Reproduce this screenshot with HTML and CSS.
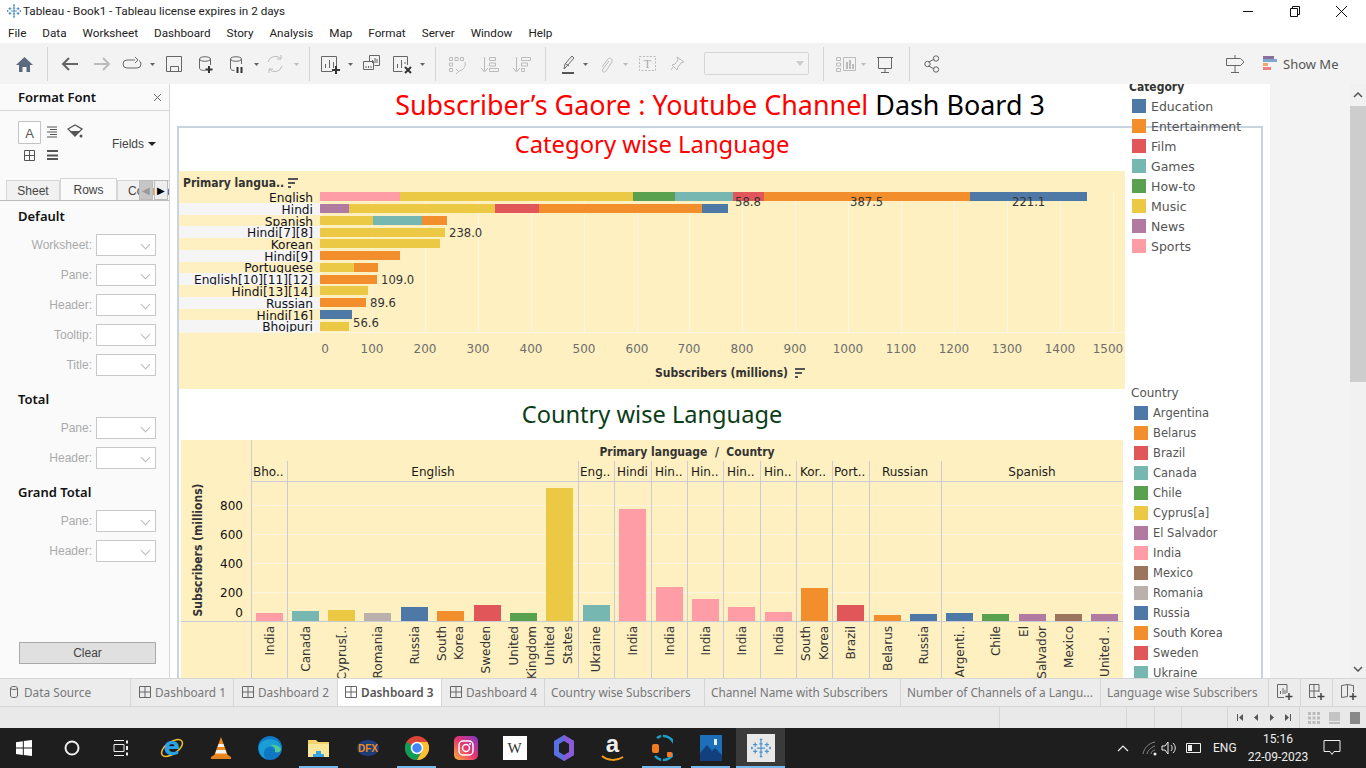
FILE: index.html
```html
<!DOCTYPE html>
<html>

<head>
    <title>Tableau - Book1</title>
    <link rel="stylesheet" href="styles.css">
</head>

<body>
    <svg class="defs" width="0" height="0">
        <symbol id="tableau-mark" viewBox="0 0 24 24">
            <path d="M12 3v18M7 12h10M10 7h4M10 17h4M5 5.500v5M2.500 8h5M19 5.500v5M16.500 8h5M5 13.500v5M2.500 16h5M19 13.500v5M16.500 16h5M12 0.500v3M10.500 2h3M12 20.500v3M10.500 22h3M1 10.500v3M-.5 12h3M23 10.500v3M21.500 12h3" fill="none" stroke-width="1.500"/>
        </symbol>
        <symbol id="dash-grid" viewBox="0 0 12 12">
            <path d="M.5.500h11v11H.500zM6 .5v11M.5 6h11" fill="none" stroke="#666"/>
        </symbol>
        <symbol id="sort-bars" viewBox="0 0 10 10">
            <path d="M0 0h11v2H0zM0 4h7v2H0zM0 8h3v2H0z" fill="#555"/>
        </symbol>
    </svg>

    <div class="app">
        <!-- Window title -->
        <div class="titlebar">
            <svg class="title-icon" width="14" height="14"><use href="#tableau-mark" stroke="#3b7fb8"/></svg>
            <span class="title-text">Tableau - Book1 - Tableau license expires in 2 days</span>
            <div class="win-buttons">
                <svg width="46" height="20" viewBox="0 0 46 20"><path d="M18 10.500h10" stroke="#111" fill="none"/></svg>
                <svg width="46" height="20" viewBox="0 0 46 20"><path d="M18.500 7.500h7v8h-7zM20.500 7.500v-2h7v8h-2" stroke="#111" fill="none"/></svg>
                <svg width="46" height="20" viewBox="0 0 46 20"><path d="M17 5l11 11M28 5L17 16" stroke="#111" fill="none"/></svg>
            </div>
        </div>

        <div class="menubar">
            <span>File</span><span>Data</span><span>Worksheet</span><span>Dashboard</span><span>Story</span><span>Analysis</span><span>Map</span><span>Format</span><span>Server</span><span>Window</span><span>Help</span>
        </div>

        <!-- Toolbar: each svg uses page x coordinates in its viewBox -->
        <div class="toolbar">
            <svg width="47" height="41" viewBox="0 43 47 41">
                <path d="M16 65l8.500-8 8.500 8h-3v7h-3.500v-5h-4v5H19v-7z" fill="#5b6b7d"/>
            </svg>
            <div class="tb-sep"></div>
            <svg width="261" height="41" viewBox="48 43 261 41">
                <path class="ic-bold" d="M78 64H63M69 58l-6 6 6 6"/>
                <path class="ic-bold off" d="M94 64h15M103 58l6 6-6 6"/>
                <path class="ic" d="M135 60h-8a4 4 0 0 0 0 8h10a4 4 0 0 0 4-4 4 4 0 0 0-2-3.500M135 57l3 3-3 3"/>
                <path class="caret" d="M150 63h5l-2.500 3z"/>
                <path class="ic" d="M166.500 56.500h15v15h-15zM170.500 71v-4.500h8V71"/>
                <path class="ic" d="M199.500 59c0-3 11-3 11 0v6M199.500 59c0 3 11 3 11 0M199.500 59v9c0 2 3 2.500 6 2.500"/>
                <path class="plus" d="M209 66v7M205.500 69.500h7"/>
                <path class="ic" d="M230.500 59c0-3 11-3 11 0v5M230.500 59c0 3 11 3 11 0M230.500 59v9c0 2 2 2.500 4 2.500"/>
                <path class="plus" d="M237.500 67v6M241.500 67v6"/>
                <path class="caret" d="M254 63h5l-2.500 3z"/>
                <path class="ic off" d="M268 62a7.500 7.500 0 0 1 13-3M282 66a7.500 7.500 0 0 1-13 3M281 55v4h-4M269 73v-4h4"/>
                <path class="caret off" d="M294 63h5l-2.500 3z"/>
            </svg>
            <div class="tb-sep"></div>
            <svg width="125" height="41" viewBox="310 43 125 41">
                <path class="ic" d="M336.500 66v-9.500h-15v15h11M325.500 68v-4M329.500 68v-8M333.500 68v-6"/>
                <path class="plus" d="M336 66v8M332 70h8"/>
                <path class="caret" d="M348 63h5l-2.500 3z"/>
                <path class="ic" d="M369.500 61v-5.500h10v10h-5M372.500 63v-3M375 63v-5M377 63v-4M363.500 61.500h10v8h-10zM366 68v-2M368.500 68v-2M371 68v-2"/>
                <path class="ic" d="M407.500 65v-8.500h-14v15h9M397.500 68v-4M401.500 68v-8M405 64v-2"/>
                <path class="plus" d="M405 67l6 6M411 67l-6 6"/>
                <path class="caret" d="M420 63h5l-2.500 3z"/>
            </svg>
            <div class="tb-sep"></div>
            <svg width="109" height="41" viewBox="436 43 109 41">
                <path class="ic off" d="M449.500 57.500h3v3h-3zM455 57.500h3v3h-3zM460.500 57.500h3v3h-3zM449.500 63h3v3h-3zM449.500 68.500h3v3h-3zM465 62c1 4-1 8-6 9M456 69l2.500 2.500L456 74"/>
                <path class="ic off" d="M484.500 57v14M481 68l3.500 4 3.500-4M489.500 57.500h6v3h-6zM489.500 63h6v3h-6zM489.500 68.500h9v3h-9z"/>
                <path class="ic off" d="M516.500 57v14M513 68l3.500 4 3.500-4M521.500 57.500h9v3h-9zM521.500 63h6v3h-6zM521.500 68.500h3v3h-3z"/>
            </svg>
            <div class="tb-sep"></div>
            <svg width="158" height="41" viewBox="546 43 158 41">
                <path class="ic" d="M564 69l1-5 7-8 2 2-7 8zM566 64l3 2"/>
                <path d="M562 72h12v2h-12z" fill="#555"/>
                <path class="caret" d="M583 63h5l-2.500 3z"/>
                <path class="ic off" d="M609 61l-6 8c-2 3 1 4 3 2l6-9c1-3-2-5-4-3l-6 8"/>
                <path class="caret off" d="M623 63h5l-2.500 3z"/>
                <path class="ic off dashed" d="M639.500 56.500h16v14h-16z"/>
                <text class="t-box" x="647.500" y="68" text-anchor="middle">T</text>
                <path class="ic off" d="M677 57l7 5-3 1-3 4-1 3-5-5 3-1 3-4zM673 67l-2 3"/>
            </svg>
            <div class="tb-select"><svg width="8" height="5" viewBox="0 0 8 5"><path d="M0 0h8L4 5z" fill="#ccc"/></svg></div>
            <div class="tb-gap"></div>
            <div class="tb-sep"></div>
            <svg width="85" height="41" viewBox="824 43 85 41">
                <path class="ic off" d="M836.500 57.500h4v3h-4zM836.500 63h4v3h-4zM836.500 68.500h4v3h-4zM843.500 57.500h12v13h-12z"/>
                <path d="M846 62h2v7h-2zM849 60h2v9h-2zM852 64h2v5h-2z" fill="#bbb"/>
                <path class="caret off" d="M861 63h5l-2.500 3z"/>
                <path class="ic" d="M877 57.500h16M878.500 57.500v11h13v-11M885 68.500v4M881 72.500h8"/>
            </svg>
            <div class="tb-sep"></div>
            <svg width="40" height="41" viewBox="910 43 40 41">
                <path class="ic" d="M928.500 62l6-3M928.500 66l6 3"/>
                <circle class="ic" cx="927.500" cy="64" r="2.700"/>
                <circle class="ic" cx="936" cy="58.500" r="2.700"/>
                <circle class="ic" cx="936" cy="69.500" r="2.700"/>
            </svg>
            <div class="tb-spacer"></div>
            <svg width="30" height="41" viewBox="1220 43 30 41">
                <path class="ic" d="M1235 55v3M1226.500 58.500h14l3.500 3.500-3.500 3.500h-14zM1235 65.500V72M1231 72.500h8"/>
            </svg>
            <svg class="showme-icon" width="16" height="18" viewBox="0 0 16 18">
                <path d="M1 1h11v3H1z" fill="#8a6f9e"/>
                <path d="M1 4h14v3H1z" fill="#7ea6cf"/>
                <path d="M1 8h5v3H1z" fill="#f0a56b"/>
                <path d="M1 12h8v3H1z" fill="#ef7f86"/>
            </svg>
            <span class="showme">Show Me</span>
        </div>

        <div class="main">
            <!-- Format pane -->
            <aside class="sidebar">
                <div class="pane-head">
                    <span>Format Font</span>
                    <svg width="9" height="9" viewBox="0 0 9 9"><path d="M1 1l7 7M8 1L1 8" stroke="#666" fill="none"/></svg>
                </div>
                <div class="pane-icons">
                    <svg width="80" height="46" viewBox="18 121 80 46">
                        <path d="M18.500 121.500h22v22h-22z" fill="#fff" stroke="#c4c4c4"/>
                        <text class="a-glyph" x="29.500" y="138" text-anchor="middle">A</text>
                        <path d="M47 127h10M50 129.500h7M47 132h10M50 134.500h7M47 137h10" stroke="#555" fill="none"/>
                        <path d="M68 129l7-4 7 4-7 7z" fill="none" stroke="#555" stroke-width="1.300"/>
                        <path d="M70 131h10l-5 5z" fill="#555"/>
                        <circle cx="81" cy="136" r="1.500" fill="#555"/>
                        <path d="M24.500 150.500h10v10h-10zM29.500 150.500v10M24.500 155.500h10" fill="none" stroke="#555"/>
                        <path d="M47 150h11v2H47zM47 154.500h11v2H47zM47 158h11v2H47z" fill="#555"/>
                    </svg>
                    <div class="fields">Fields<span class="fields-caret"></span></div>
                </div>
                <div class="pane-tabs">
                    <span class="pane-tab">Sheet</span>
                    <span class="pane-tab active">Rows</span>
                    <span class="pane-tab last">Columns</span>
                    <div class="tab-arrows"><span class="arrow-off">&#9664;</span><span class="arrow-on">&#9654;</span></div>
                </div>

                <section class="fmt-group first">
                    <h4>Default</h4>
                    <div class="fmt-row"><label>Worksheet:</label><span class="fmt-select"></span></div>
                    <div class="fmt-row"><label>Pane:</label><span class="fmt-select"></span></div>
                    <div class="fmt-row"><label>Header:</label><span class="fmt-select"></span></div>
                    <div class="fmt-row"><label>Tooltip:</label><span class="fmt-select"></span></div>
                    <div class="fmt-row"><label>Title:</label><span class="fmt-select"></span></div>
                </section>
                <section class="fmt-group">
                    <h4>Total</h4>
                    <div class="fmt-row"><label>Pane:</label><span class="fmt-select"></span></div>
                    <div class="fmt-row"><label>Header:</label><span class="fmt-select"></span></div>
                </section>
                <section class="fmt-group">
                    <h4>Grand Total</h4>
                    <div class="fmt-row"><label>Pane:</label><span class="fmt-select"></span></div>
                    <div class="fmt-row"><label>Header:</label><span class="fmt-select"></span></div>
                </section>
                <button class="clear-btn">Clear</button>
            </aside>

            <!-- Dashboard -->
            <div class="canvas">
                <h1 class="dash-title"><span class="red">Subscriber’s Gaore : Youtube Channel</span> Dash Board 3</h1>
                <div class="frame">
                    <h2 class="chart-title red">Category wise Language</h2>
                    <svg class="chart" width="946" height="218" viewBox="179 171 946 218">
                        <rect class="bg" x="179" y="171" width="946" height="218"/>
                        <text class="head" x="183" y="187">Primary langua..</text>
                        <use href="#sort-bars" x="288" y="178" width="10" height="10"/>

                        <!-- row bands come before each label, so the next band cuts the descenders -->
                        <rect class="bg" x="179" y="190" width="141" height="13"/>
                        <text class="row" x="313" y="202">English</text>
                        <rect class="band" x="179" y="203" width="141" height="12"/>
                        <text class="row" x="313" y="214">Hindi</text>
                        <rect class="bg" x="179" y="215" width="141" height="11"/>
                        <text class="row" x="313" y="226">Spanish</text>
                        <rect class="band" x="179" y="226" width="141" height="12"/>
                        <text class="row" x="313" y="237">Hindi[7][8]</text>
                        <rect class="bg" x="179" y="238" width="141" height="12"/>
                        <text class="row" x="313" y="249">Korean</text>
                        <rect class="band" x="179" y="250" width="141" height="12"/>
                        <text class="row" x="313" y="261">Hindi[9]</text>
                        <rect class="bg" x="179" y="262" width="141" height="11"/>
                        <text class="row" x="313" y="272">Portuguese</text>
                        <rect class="band" x="179" y="273" width="141" height="12"/>
                        <text class="row" x="313" y="284">English[10][11][12]</text>
                        <rect class="bg" x="179" y="285" width="141" height="12"/>
                        <text class="row" x="313" y="296">Hindi[13][14]</text>
                        <rect class="band" x="179" y="297" width="141" height="12"/>
                        <text class="row" x="313" y="308">Russian</text>
                        <rect class="bg" x="179" y="309" width="141" height="11"/>
                        <text class="row" x="313" y="320">Hindi[16]</text>
                        <rect class="band" x="179" y="320" width="141" height="12"/>
                        <text class="row" x="313" y="331">Bhojpuri</text>
                        <rect class="bg" x="179" y="332" width="141" height="10"/>

                        <path class="grid" d="M320.500 191v141M372.500 191v141M425.500 191v141M478.500 191v141M531.500 191v141M584.500 191v141M637.500 191v141M689.500 191v141M742.500 191v141M795.500 191v141M848.500 191v141M901.500 191v141M954.500 191v141M1007.500 191v141M1060.500 191v141M1113.500 191v141M179 332.500h946"/>

                        <rect class="pink" x="320" y="192" width="80" height="9"/>
                        <rect class="yellow" x="400" y="192" width="233" height="9"/>
                        <rect class="green" x="633" y="192" width="42" height="9"/>
                        <rect class="teal" x="675" y="192" width="58" height="9"/>
                        <rect class="red" x="733" y="192" width="31" height="9"/>
                        <rect class="orange" x="764" y="192" width="206" height="9"/>
                        <rect class="blue" x="970" y="192" width="117" height="9"/>

                        <rect class="purple" x="320" y="204" width="29" height="9"/>
                        <rect class="yellow" x="349" y="204" width="146" height="9"/>
                        <rect class="red" x="495" y="204" width="44" height="9"/>
                        <rect class="orange" x="539" y="204" width="163" height="9"/>
                        <rect class="blue" x="702" y="204" width="26" height="9"/>

                        <rect class="yellow" x="320" y="216" width="53" height="9"/>
                        <rect class="teal" x="373" y="216" width="49" height="9"/>
                        <rect class="orange" x="422" y="216" width="25" height="9"/>

                        <rect class="yellow" x="320" y="228" width="125" height="9"/>
                        <rect class="yellow" x="320" y="239" width="120" height="9"/>
                        <rect class="orange" x="320" y="251" width="80" height="9"/>
                        <rect class="yellow" x="320" y="263" width="34" height="9"/>
                        <rect class="orange" x="354" y="263" width="24" height="9"/>
                        <rect class="orange" x="320" y="275" width="57" height="9"/>
                        <rect class="yellow" x="320" y="286" width="48" height="9"/>
                        <rect class="orange" x="320" y="298" width="46" height="9"/>
                        <rect class="blue" x="320" y="310" width="32" height="9"/>
                        <rect class="yellow" x="320" y="322" width="29" height="9"/>

                        <text class="mark" x="735" y="206">58.8</text>
                        <text class="mark" x="850" y="206">387.5</text>
                        <text class="mark" x="1012" y="206">221.1</text>
                        <text class="mark" x="449" y="237">238.0</text>
                        <text class="mark" x="381" y="284">109.0</text>
                        <text class="mark" x="370" y="307">89.6</text>
                        <text class="mark" x="353" y="327">56.6</text>

                        <g class="ticks">
                            <text x="325" y="353">0</text>
                            <text x="372" y="353">100</text>
                            <text x="425" y="353">200</text>
                            <text x="478" y="353">300</text>
                            <text x="531" y="353">400</text>
                            <text x="584" y="353">500</text>
                            <text x="637" y="353">600</text>
                            <text x="689" y="353">700</text>
                            <text x="742" y="353">800</text>
                            <text x="795" y="353">900</text>
                            <text x="848" y="353">1000</text>
                            <text x="901" y="353">1100</text>
                            <text x="954" y="353">1200</text>
                            <text x="1007" y="353">1300</text>
                            <text x="1060" y="353">1400</text>
                            <text x="1108" y="353">1500</text>
                        </g>
                        <text class="head" x="655" y="377">Subscribers (millions)</text>
                        <use href="#sort-bars" x="795" y="368" width="10" height="10"/>
                    </svg>

                    <h2 class="chart-title dark">Country wise Language</h2>
                    <svg class="chart second" width="942" height="240" viewBox="181 440 942 240">
                        <rect class="bg" x="181" y="440" width="942" height="240"/>
                        <path class="grid" d="M252 505.500h871M252 534.500h871M252 563.500h871M252 592.500h871"/>
                        <path class="divider" d="M251.500 440v240M287.500 461v219M578.500 461v219M614.500 461v219M651.500 461v219M687.500 461v219M723.500 461v219M760.500 461v219M796.500 461v219M832.500 461v219M869.500 461v219M941.500 461v219M252 481.500h871M181 621.500h942"/>

                        <text class="head" x="687" y="456" text-anchor="middle">Primary language  /  Country</text>
                        <text class="sub" x="253" y="476">Bho..</text>
                        <text class="sub" x="433" y="476" text-anchor="middle">English</text>
                        <text class="sub" x="580" y="476">Eng..</text>
                        <text class="sub" x="617" y="476">Hindi</text>
                        <text class="sub" x="655" y="476">Hin..</text>
                        <text class="sub" x="691" y="476">Hin..</text>
                        <text class="sub" x="727" y="476">Hin..</text>
                        <text class="sub" x="764" y="476">Hin..</text>
                        <text class="sub" x="800" y="476">Kor..</text>
                        <text class="sub" x="834" y="476">Port..</text>
                        <text class="sub" x="905" y="476" text-anchor="middle">Russian</text>
                        <text class="sub" x="1032" y="476" text-anchor="middle">Spanish</text>

                        <text class="head" transform="rotate(-90 202 550)" x="202" y="550" text-anchor="middle">Subscribers (millions)</text>
                        <g class="yticks">
                            <text x="243" y="510">800</text>
                            <text x="243" y="539">600</text>
                            <text x="243" y="568">400</text>
                            <text x="243" y="597">200</text>
                            <text x="243" y="617">0</text>
                        </g>

                        <rect class="pink" x="256" y="613" width="27" height="8"/>
                        <rect class="teal" x="292" y="611" width="27" height="10"/>
                        <rect class="yellow" x="328" y="610" width="27" height="11"/>
                        <rect class="gray" x="364" y="613" width="27" height="8"/>
                        <rect class="blue" x="401" y="607" width="27" height="14"/>
                        <rect class="orange" x="437" y="611" width="27" height="10"/>
                        <rect class="red" x="474" y="605" width="27" height="16"/>
                        <rect class="green" x="510" y="613" width="27" height="8"/>
                        <rect class="yellow" x="546" y="488" width="27" height="133"/>
                        <rect class="teal" x="583" y="605" width="27" height="16"/>
                        <rect class="pink" x="619" y="509" width="27" height="112"/>
                        <rect class="pink" x="656" y="587" width="27" height="34"/>
                        <rect class="pink" x="692" y="599" width="27" height="22"/>
                        <rect class="pink" x="728" y="607" width="27" height="14"/>
                        <rect class="pink" x="765" y="612" width="27" height="9"/>
                        <rect class="orange" x="801" y="588" width="27" height="33"/>
                        <rect class="red" x="837" y="605" width="27" height="16"/>
                        <rect class="orange" x="874" y="615" width="27" height="6"/>
                        <rect class="blue" x="910" y="614" width="27" height="7"/>
                        <rect class="blue" x="946" y="613" width="27" height="8"/>
                        <rect class="green" x="982" y="614" width="27" height="7"/>
                        <rect class="purple" x="1019" y="614" width="27" height="7"/>
                        <rect class="brown" x="1055" y="614" width="27" height="7"/>
                        <rect class="purple" x="1091" y="614" width="27" height="7"/>

                        <g class="vlabels">
                            <text transform="rotate(-90 274 626)" x="274" y="626">India</text>
                            <text transform="rotate(-90 310 626)" x="310" y="626">Canada</text>
                            <text transform="rotate(-90 346 626)" x="346" y="626">Cyprus[..</text>
                            <text transform="rotate(-90 382 626)" x="382" y="626">Romania</text>
                            <text transform="rotate(-90 419 626)" x="419" y="626">Russia</text>
                            <text transform="rotate(-90 446 626)" x="446" y="626">South</text>
                            <text transform="rotate(-90 463 626)" x="463" y="626">Korea</text>
                            <text transform="rotate(-90 490 626)" x="490" y="626">Sweden</text>
                            <text transform="rotate(-90 518 626)" x="518" y="626">United</text>
                            <text transform="rotate(-90 536 626)" x="536" y="626">Kingdom</text>
                            <text transform="rotate(-90 554 626)" x="554" y="626">United</text>
                            <text transform="rotate(-90 572 626)" x="572" y="626">States</text>
                            <text transform="rotate(-90 600 626)" x="600" y="626">Ukraine</text>
                            <text transform="rotate(-90 637 626)" x="637" y="626">India</text>
                            <text transform="rotate(-90 674 626)" x="674" y="626">India</text>
                            <text transform="rotate(-90 710 626)" x="710" y="626">India</text>
                            <text transform="rotate(-90 746 626)" x="746" y="626">India</text>
                            <text transform="rotate(-90 783 626)" x="783" y="626">India</text>
                            <text transform="rotate(-90 810 626)" x="810" y="626">South</text>
                            <text transform="rotate(-90 828 626)" x="828" y="626">Korea</text>
                            <text transform="rotate(-90 855 626)" x="855" y="626">Brazil</text>
                            <text transform="rotate(-90 892 626)" x="892" y="626">Belarus</text>
                            <text transform="rotate(-90 928 626)" x="928" y="626">Russia</text>
                            <text transform="rotate(-90 964 626)" x="964" y="626">Argenti..</text>
                            <text transform="rotate(-90 1000 626)" x="1000" y="626">Chile</text>
                            <text transform="rotate(-90 1028 626)" x="1028" y="626">El</text>
                            <text transform="rotate(-90 1046 626)" x="1046" y="626">Salvador</text>
                            <text transform="rotate(-90 1073 626)" x="1073" y="626">Mexico</text>
                            <text transform="rotate(-90 1109 626)" x="1109" y="626">United ..</text>
                        </g>
                    </svg>
                </div>

                <!-- Legends float over the frame -->
                <div class="legend legend-category">
                    <div class="legend-title">Category</div>
                    <div class="legend-row"><i class="blue"></i>Education</div>
                    <div class="legend-row"><i class="orange"></i>Entertainment</div>
                    <div class="legend-row"><i class="red"></i>Film</div>
                    <div class="legend-row"><i class="teal"></i>Games</div>
                    <div class="legend-row"><i class="green"></i>How-to</div>
                    <div class="legend-row"><i class="yellow"></i>Music</div>
                    <div class="legend-row"><i class="purple"></i>News</div>
                    <div class="legend-row"><i class="pink"></i>Sports</div>
                </div>
                <div class="legend legend-country">
                    <div class="legend-title">Country</div>
                    <div class="legend-row"><i class="blue"></i>Argentina</div>
                    <div class="legend-row"><i class="orange"></i>Belarus</div>
                    <div class="legend-row"><i class="red"></i>Brazil</div>
                    <div class="legend-row"><i class="teal"></i>Canada</div>
                    <div class="legend-row"><i class="green"></i>Chile</div>
                    <div class="legend-row"><i class="yellow"></i>Cyprus[a]</div>
                    <div class="legend-row"><i class="purple"></i>El Salvador</div>
                    <div class="legend-row"><i class="pink"></i>India</div>
                    <div class="legend-row"><i class="brown"></i>Mexico</div>
                    <div class="legend-row"><i class="gray"></i>Romania</div>
                    <div class="legend-row"><i class="blue"></i>Russia</div>
                    <div class="legend-row"><i class="orange"></i>South Korea</div>
                    <div class="legend-row"><i class="red"></i>Sweden</div>
                    <div class="legend-row"><i class="teal"></i>Ukraine</div>
                </div>
            </div>

            <div class="gutter"></div>
            <div class="scrollbar">
                <div class="scroll-btn"><svg width="10" height="6" viewBox="0 0 10 6"><path d="M1 5l4-4 4 4" fill="none" stroke="#555" stroke-width="1.500"/></svg></div>
                <div class="scroll-thumb"></div>
                <div class="scroll-track"></div>
                <div class="scroll-btn down"><svg width="10" height="6" viewBox="0 0 10 6"><path d="M1 1l4 4 4-4" fill="none" stroke="#555" stroke-width="1.500"/></svg></div>
            </div>
        </div>

        <!-- Sheet tabs -->
        <div class="tabbar">
            <div class="tab t-source"><svg width="8" height="12" viewBox="0 0 8 12"><path d="M.5 2c0-2 7-2 7 0v8c0 2-7 2-7 0zM.5 2c0 2 7 2 7 0" fill="none" stroke="#666"/></svg>Data Source</div>
            <div class="tab t-dash"><svg width="12" height="12"><use href="#dash-grid"/></svg>Dashboard 1</div>
            <div class="tab t-dash2"><svg width="12" height="12"><use href="#dash-grid"/></svg>Dashboard 2</div>
            <div class="tab t-active"><svg width="12" height="12"><use href="#dash-grid"/></svg>Dashboard 3</div>
            <div class="tab t-dash4"><svg width="12" height="12"><use href="#dash-grid"/></svg>Dashboard 4</div>
            <div class="tab t-country">Country wise Subscribers</div>
            <div class="tab t-channel">Channel Name with Subscribers</div>
            <div class="tab t-number">Number of Channels of a Langu...</div>
            <div class="tab t-language">Language wise Subscribers</div>
            <div class="tab t-add"><svg width="18" height="18" viewBox="0 0 18 18"><path d="M11 10V1.500H1.500v13H8M4.500 11V8M7 11V5M9 11V7" fill="none" stroke="#666"/><path d="M13 10v7M9.500 13.500h7" stroke="#444" stroke-width="1.500" fill="none"/></svg></div>
            <div class="tab t-add"><svg width="18" height="18" viewBox="0 0 18 18"><path d="M11 9V1.500H1.500v13H8M1.500 8h9.500M6 1.500V14" fill="none" stroke="#666"/><path d="M13 10v7M9.500 13.500h7" stroke="#444" stroke-width="1.500" fill="none"/></svg></div>
            <div class="tab t-add last"><svg width="18" height="18" viewBox="0 0 18 18"><path d="M1.500 2.500l6-1v12l-6 1zM7.500 1.500l6 1V9" fill="none" stroke="#666"/><path d="M13 10v7M9.500 13.500h7" stroke="#444" stroke-width="1.500" fill="none"/></svg></div>
        </div>

        <div class="statusbar">
            <span class="st-cell st-wide"></span>
            <span class="st-cell st-b"></span>
            <span class="st-cell st-c"></span>
            <span class="st-cell st-d"></span>
            <span class="st-cell st-e"></span>
            <span class="st-nav">
                <svg width="72" height="21" viewBox="1227 707 72 21">
                    <path d="M1236.500 714v7" stroke="#555" fill="none"/>
                    <path d="M1242 714v7l-4-3.500zM1257 714v7l-4-3.500zM1269 714v7l4-3.500zM1284 714v7l4-3.500z" fill="#555"/>
                    <path d="M1289.500 714v7" stroke="#555" fill="none"/>
                </svg>
            </span>
            <span class="st-views">
                <svg width="67" height="21" viewBox="1299 707 67 21">
                    <path d="M1307 712h3v3h-3zM1311.500 712h3v3h-3zM1316 712h3v3h-3zM1307 716.500h3v3h-3zM1311.500 716.500h3v3h-3zM1316 716.500h3v3h-3zM1307 721h3v3h-3zM1311.500 721h3v3h-3zM1316 721h3v3h-3z" fill="#bbb"/>
                    <path d="M1328 712h11v9h-11z" fill="#c4c4c4"/>
                    <path d="M1328 722h11v2h-11z" fill="#bbb"/>
                    <path d="M1349 712h10v12h-10z" fill="#888"/>
                </svg>
            </span>
        </div>

        <!-- Windows taskbar -->
        <div class="taskbar">
            <div class="task-slot start">
                <svg width="16" height="16" viewBox="0 0 16 16"><path d="M0 2.200l6.800-1v6.400H0zM7.800 1L16 0v7.600H7.800zM0 8.600h6.800v6.300l-6.800-1zM7.800 8.600H16V16l-8.200-1.100z" fill="#fff"/></svg>
            </div>
            <div class="task-slot cortana">
                <svg width="16" height="16" viewBox="0 0 16 16"><circle cx="8" cy="8" r="6.500" fill="none" stroke="#eee" stroke-width="2"/></svg>
            </div>
            <div class="task-slot taskview">
                <svg width="16" height="16" viewBox="0 0 16 16"><path d="M1 .5h10M1 15.500h10M1 4.500h10v7H1z" fill="none" stroke="#eee"/><path d="M13 .5h2v3h-2zM13 6h2v4h-2zM13 12.500h2v3h-2z" fill="#eee"/></svg>
            </div>
            <div class="task-slot">
                <svg width="24" height="24" viewBox="0 0 24 24"><ellipse cx="12" cy="12" rx="12" ry="6" transform="rotate(-35 12 12)" fill="none" stroke="#f2c12e" stroke-width="1.500"/><text class="ie-e" x="12" y="19" text-anchor="middle">e</text></svg>
            </div>
            <div class="task-slot">
                <svg width="22" height="24" viewBox="0 0 22 24"><path d="M1 21l3-2h14l3 2v2H1z" fill="#e8821e"/><path d="M11 1l7 19H4z" fill="#f08a1d"/><path d="M8.600 8h4.800l1 3H7.600zM6.500 14h9l1 3.500H5.300z" fill="#f2f2f2"/></svg>
            </div>
            <div class="task-slot">
                <svg width="24" height="24" viewBox="0 0 24 24"><circle cx="12" cy="12" r="12" fill="#0f77c4"/><path d="M1 10C3 2 19 0 23 10c1 5-3 7-6 6 1-6-9-8-11 0-1 3 1 6 3 7-5-1-9-7-8-13z" fill="#1a9ed8"/><path d="M12 9c5-1 9 1 11 4 0 3-3 4-6 3 1-3-1-6-5-7z" fill="#4ecb8e"/></svg>
            </div>
            <div class="task-slot open">
                <svg width="22" height="20" viewBox="0 0 22 20"><path d="M0 2h8l2 2h11v15H0z" fill="#f3d26b"/><path d="M0 6h21v13H0z" fill="#fbe79a"/><path d="M8 13h5v6H8zM5 16h11v3H5z" fill="#3aa2dc"/></svg>
            </div>
            <div class="task-slot">
                <svg width="24" height="20" viewBox="0 0 24 20"><ellipse cx="12" cy="10" rx="11" ry="8" fill="#1c3e78"/><text class="dfx" x="12" y="14" text-anchor="middle">DFX</text></svg>
            </div>
            <div class="task-slot open">
                <svg width="24" height="24" viewBox="0 0 24 24"><circle cx="12" cy="12" r="12" fill="#db4437"/><path d="M12 12L1.600 6A12 12 0 0 0 12 24l5.200-9z" fill="#0f9d58"/><path d="M12 6h10.400A12 12 0 0 1 12 24l5.200-9z" fill="#fbc02d"/><circle cx="12" cy="12" r="5.500" fill="#4285f4" stroke="#fff" stroke-width="1.500"/></svg>
            </div>
            <div class="task-slot">
                <svg width="24" height="24" viewBox="0 0 24 24"><defs><linearGradient id="insta" x1="0" y1="1" x2="1" y2="0"><stop offset="0" stop-color="#fdb33a"/><stop offset=".5" stop-color="#e8336f"/><stop offset="1" stop-color="#7a3bc8"/></linearGradient></defs><rect width="24" height="24" rx="5" fill="url(#insta)"/><rect x="5" y="5" width="14" height="14" rx="4" fill="none" stroke="#fff" stroke-width="1.500"/><circle cx="12" cy="12" r="3.500" fill="none" stroke="#fff" stroke-width="1.500"/><circle cx="16" cy="8" r="1" fill="#fff"/></svg>
            </div>
            <div class="task-slot">
                <div class="wiki">W</div>
            </div>
            <div class="task-slot">
                <svg width="20" height="26" viewBox="0 0 20 26"><path d="M10 0l10 6v14l-10 6-10-6V6z" fill="#5a6fe0"/><path d="M10 0l10 6v14l-10 6z" fill="#8a5bd6"/><path d="M10 6l5 3v8l-5 3-5-3V9z" fill="#1f1f1f"/></svg>
            </div>
            <div class="task-slot amazon">
                <span class="amazon-a">a</span>
                <svg width="24" height="7" viewBox="0 0 24 7"><path d="M1 1c6 5 15 5 21 1" fill="none" stroke="#f49b1c" stroke-width="2"/></svg>
            </div>
            <div class="task-slot open">
                <svg width="22" height="28" viewBox="0 0 22 28"><path d="M12 2a12 12 0 0 1 0 24" fill="none" stroke="#1aa0c8" stroke-width="2.500"/><path d="M10 2a12 12 0 0 0-4 2M10 26a12 12 0 0 1-6-4" fill="none" stroke="#1aa0c8" stroke-width="2.500"/><rect x="1" y="10" width="7" height="9" rx="2" fill="#f07b22"/><rect x="16" y="18" width="5" height="5" rx="1" fill="#f07b22"/></svg>
            </div>
            <div class="task-slot open">
                <svg width="22" height="26" viewBox="0 0 22 26"><rect width="22" height="26" fill="#1c6fb8"/><path d="M0 18l7-8 5 6 3-3 7 7v6H0z" fill="#12407e"/><rect x="14" y="4" width="3" height="6" fill="#dff1fb"/></svg>
            </div>
            <div class="task-slot active-app">
                <div class="app-tile"><svg width="20" height="20"><use href="#tableau-mark" stroke="#4f94cc"/></svg></div>
            </div>
            <div class="task-spacer"></div>
            <div class="tray">
                <svg class="tray-up" width="12" height="7" viewBox="0 0 12 7"><path d="M1 6l5-5 5 5" fill="none" stroke="#eee" stroke-width="1.200"/></svg>
                <svg class="tray-wifi" width="16" height="16" viewBox="0 0 16 16"><path d="M1 14C2 8 7 3 13 2M5 14c.5-3 3-6 8-8M9 14c0-2 2-4 4-4" fill="none" stroke="#888"/><circle cx="13" cy="14" r="1.500" fill="#eee"/></svg>
                <svg class="tray-vol" width="16" height="16" viewBox="0 0 16 16"><path d="M1 6h3l3-4v12l-3-4H1z" fill="none" stroke="#eee"/><path d="M10 5c1.500 2 1.500 4 0 6M12 3c3 3 3 7 0 10" fill="none" stroke="#eee"/></svg>
                <svg class="tray-bat" width="16" height="10" viewBox="0 0 16 10"><path d="M.5.500h14v9H.500z" fill="none" stroke="#eee"/><path d="M2 2h4v6H2z" fill="#eee"/></svg>
                <span class="tray-lang">ENG</span>
                <div class="clock"><div>15:16</div><div>22-09-2023</div></div>
                <svg class="tray-note" width="18" height="16" viewBox="0 0 18 16"><path d="M1 .5h16v11h-6l-2 3-2-3H1z" fill="none" stroke="#eee"/></svg>
            </div>
        </div>
    </div>
</body>

</html>
```

FILE: styles.css
```css
* {
    box-sizing: border-box;
}

body {
    margin: 0;
    font-family: "Noto Sans", sans-serif;
    background: #fff;
    color: #222;
    overflow: hidden;
}

.defs {
    position: absolute;
}

.app {
    width: 1366px;
    height: 768px;
    display: flex;
    flex-direction: column;
    overflow: hidden;
}

/* Window title and menu */
.titlebar {
    height: 22px;
    display: flex;
    align-items: center;
    padding-left: 7px;
    font-family: Roboto, sans-serif;
    font-size: 11.700px;
}

.title-icon {
    margin-right: 2px;
}

.win-buttons {
    margin-left: auto;
    margin-right: 1px;
    display: flex;
    gap: 1px;
}

.menubar {
    height: 21px;
    display: flex;
    align-items: center;
    gap: 16px;
    padding-left: 8px;
    font-family: Roboto, sans-serif;
    font-size: 11.700px;
}

/* Toolbar */
.toolbar {
    height: 41px;
    display: flex;
    align-items: center;
    background: #f3f3f3;
}

.toolbar svg {
    flex: none;
}

.tb-sep {
    width: 1px;
    height: 34px;
    flex: none;
    background: #d6d6d6;
}

.ic,
.ic-bold {
    fill: none;
    stroke: #666;
}

.ic-bold {
    stroke-width: 2;
}

.ic.off,
.ic-bold.off {
    stroke: #bbb;
}

.dashed {
    stroke-dasharray: 2 1.500;
}

.plus {
    fill: none;
    stroke: #333;
    stroke-width: 2;
}

.caret {
    fill: #666;
}

.caret.off {
    fill: #bbb;
}

.t-box {
    font-family: "Liberation Serif", serif;
    font-size: 12px;
    fill: #aaa;
}

.tb-select {
    width: 105px;
    height: 23px;
    flex: none;
    display: flex;
    align-items: center;
    justify-content: flex-end;
    padding-right: 4px;
    border: 1px solid #d6d6d6;
    border-radius: 2px;
    background: #f3f3f3;
}

.tb-gap {
    width: 14px;
    flex: none;
}

.tb-spacer {
    flex: 1;
}

.showme-icon {
    margin: 0 5px 0 12px;
}

.showme {
    width: 83px;
    font-size: 13px;
    color: #555;
}

/* Main area */
.main {
    height: 594px;
    display: flex;
}

.sidebar {
    width: 170px;
    flex: none;
    display: flex;
    flex-direction: column;
    background: #fafafa;
    border-right: 1px solid #d6d6d6;
    position: relative;
}

.pane-head {
    height: 27px;
    flex: none;
    display: flex;
    align-items: center;
    justify-content: space-between;
    padding: 0 7px 0 18px;
    font-size: 13px;
    font-weight: 600;
    color: #111;
    border-bottom: 1px solid #d6d6d6;
}

.pane-icons {
    height: 67px;
    flex: none;
    position: relative;
    padding: 10px 0 0 18px;
}

.a-glyph {
    font-family: "Liberation Sans", sans-serif;
    font-size: 13px;
    fill: #555;
}

.fields {
    position: absolute;
    left: 112px;
    top: 26px;
    font-family: "Liberation Sans", sans-serif;
    font-size: 12px;
    color: #444;
    display: flex;
    align-items: center;
}

.fields-caret {
    margin-left: 4px;
    border-left: 4px solid transparent;
    border-right: 4px solid transparent;
    border-top: 4px solid #222;
}

.pane-tabs {
    height: 23px;
    flex: none;
    display: flex;
    align-items: flex-end;
    padding-left: 6px;
    font-family: "Liberation Sans", sans-serif;
    font-size: 12px;
    color: #444;
    border-bottom: 1px solid #bbb;
    position: relative;
    overflow: hidden;
}

.pane-tab {
    width: 54px;
    height: 20px;
    flex: none;
    display: flex;
    align-items: center;
    justify-content: center;
    background: #f1f1f1;
    border: 1px solid #d6d6d6;
    border-bottom: 0;
}

.pane-tab.active {
    width: 57px;
    height: 23px;
    background: #fafafa;
    margin-bottom: -1px;
}

.pane-tab.last {
    width: 60px;
    justify-content: flex-start;
    padding-left: 10px;
}

.tab-arrows {
    position: absolute;
    left: 139px;
    top: 2px;
    display: flex;
    gap: 1px;
    font-size: 10px;
}

.tab-arrows span {
    width: 14px;
    height: 20px;
    display: flex;
    align-items: center;
    justify-content: center;
    border: 1px solid #bbb;
}

.arrow-off {
    background: #c6c6c6;
    color: #999;
}

.arrow-on {
    background: #eee;
    color: #000;
}

.fmt-group {
    margin-top: 9px;
    font-family: "Liberation Sans", sans-serif;
}

.fmt-group.first {
    margin-top: 5px;
}

.fmt-group h4 {
    height: 20px;
    margin: 0 0 4px 18px;
    font-family: "Noto Sans", sans-serif;
    font-size: 13px;
    font-weight: 600;
    line-height: 20px;
    color: #111;
}

.fmt-row {
    height: 30px;
    display: flex;
    align-items: center;
    justify-content: flex-end;
    gap: 4px;
    padding-right: 13px;
    font-size: 12px;
    color: #aaa;
}

.fmt-select {
    width: 60px;
    height: 22px;
    position: relative;
    background: #fff;
    border: 1px solid #c8c8c8;
}

.fmt-select::after {
    content: "";
    position: absolute;
    right: 6px;
    top: 6px;
    width: 6px;
    height: 6px;
    border-right: 1px solid #bbb;
    border-bottom: 1px solid #bbb;
    transform: rotate(45deg);
}

.clear-btn {
    width: 137px;
    height: 22px;
    margin: auto 0 14px 19px;
    padding: 0;
    font-family: "Liberation Sans", sans-serif;
    font-size: 12px;
    color: #444;
    background: #e0e0e0;
    border: 1px solid #aaa;
}

/* Dashboard */
.canvas {
    width: 1100px;
    flex: none;
    position: relative;
    overflow: hidden;
    background: #fff;
}

.dash-title {
    height: 42px;
    margin: 0;
    font-size: 26.900px;
    font-weight: 400;
    line-height: 42px;
    text-align: center;
    color: #000;
    white-space: nowrap;
}

.red {
    color: #ff0000;
}

.frame {
    width: 1086px;
    height: 560px;
    margin-left: 7px;
    border: 2px solid #c8d5e1;
    border-bottom: 0;
}

.chart-title {
    width: 946px;
    margin: 0;
    font-weight: 400;
    text-align: center;
}

.chart-title.red {
    height: 43px;
    font-size: 23.800px;
    line-height: 32px;
}

.chart-title.dark {
    height: 51px;
    font-size: 23.600px;
    line-height: 50px;
    color: #0b3d17;
}

.chart {
    display: block;
    font-family: "DejaVu Sans", sans-serif;
    font-size: 12px;
}

.chart.second {
    margin-left: 2px;
}

.bg {
    fill: #fef0c0;
}

.band {
    fill: #f5f5f5;
}

.grid {
    fill: none;
    stroke: #faf5e2;
}

.divider {
    fill: none;
    stroke: #c9cbd8;
}

.head {
    font-family: "DejaVu Sans Condensed", "DejaVu Sans", sans-serif;
    font-stretch: condensed;
    font-size: 12px;
    font-weight: 700;
    fill: #333;
    white-space: pre;
}

.row {
    font-size: 12.200px;
    text-anchor: end;
    fill: #101020;
}

.sub {
    fill: #1a1a1a;
}

.mark {
    font-size: 11.600px;
    fill: #333;
}

.ticks text {
    text-anchor: middle;
    fill: #6e6e6e;
}

.yticks text {
    text-anchor: end;
    fill: #111;
}

.vlabels text {
    text-anchor: end;
    fill: #333;
}

/* Category colours, shared by marks and legend swatches */
rect.blue { fill: #4e79a7; }
rect.orange { fill: #f28e2b; }
rect.red { fill: #e15759; }
rect.teal { fill: #76b7b2; }
rect.green { fill: #59a14f; }
rect.yellow { fill: #ebc944; }
rect.purple { fill: #b07aa1; }
rect.pink { fill: #ff9da7; }
rect.brown { fill: #9c755f; }
rect.gray { fill: #bab0ac; }

i.blue { background: #4e79a7; }
i.orange { background: #f28e2b; }
i.red { background: #e15759; }
i.teal { background: #76b7b2; }
i.green { background: #59a14f; }
i.yellow { background: #ebc944; }
i.purple { background: #b07aa1; }
i.pink { background: #ff9da7; }
i.brown { background: #9c755f; }
i.gray { background: #bab0ac; }

.legend {
    position: absolute;
    font-family: "DejaVu Sans", sans-serif;
    color: #555;
    white-space: nowrap;
}

.legend-category {
    left: 959px;
    top: -5px;
    font-size: 12.500px;
}

.legend-country {
    left: 961px;
    top: 301px;
    font-size: 11.500px;
}

.legend-title {
    height: 17px;
    line-height: 16px;
    font-size: 12px;
}

.legend-category .legend-title {
    font-family: "DejaVu Sans Condensed", "DejaVu Sans", sans-serif;
    font-stretch: condensed;
    font-weight: 700;
    color: #333;
}

.legend-country .legend-title {
    height: 18px;
    line-height: 16px;
}

.legend-row {
    height: 20px;
    display: flex;
    align-items: center;
    gap: 5px;
    padding-left: 3px;
}

.legend-row i {
    width: 14px;
    height: 14px;
    flex: none;
}

.gutter {
    width: 80px;
    flex: none;
    background: #f3f3f3;
}

.scrollbar {
    width: 16px;
    flex: none;
    display: flex;
    flex-direction: column;
    background: #f1f1f1;
}

.scroll-btn {
    height: 22px;
    flex: none;
    display: flex;
    align-items: center;
    justify-content: center;
}

.scroll-btn.down {
    height: 18px;
}

.scroll-thumb {
    height: 276px;
    flex: none;
    background: #cdcdcd;
}

.scroll-track {
    flex: 1;
}

/* Sheet tabs */
.tabbar {
    height: 29px;
    display: flex;
    background: #ececec;
    border-top: 1px solid #d6d6d6;
    border-bottom: 1px solid #d6d6d6;
    font-size: 11.800px;
    color: #777;
}

.tab {
    flex: none;
    display: flex;
    align-items: center;
    gap: 4px;
    padding-bottom: 2px;
    white-space: nowrap;
    border-right: 1px solid #d6d6d6;
}

.t-source { width: 131px; padding-left: 10px; gap: 6px; }
.t-dash { width: 103px; padding-left: 8px; }
.t-dash2 { width: 104px; padding-left: 8px; }
.t-active { width: 104px; padding-left: 7px; background: #fff; font-weight: 600; color: #555; }
.t-dash4 { width: 103px; padding-left: 8px; }
.t-country { width: 160px; padding-left: 6px; }
.t-channel { width: 196px; padding-left: 6px; }
.t-number { width: 200px; padding-left: 6px; }
.t-language { width: 168px; padding-left: 6px; }
.t-add { width: 32px; justify-content: center; }
.t-add.last { border-right: 0; }

/* Status bar */
.statusbar {
    height: 21px;
    display: flex;
    background: #e9e9e9;
}

.st-cell {
    flex: none;
    border-right: 1px solid #d6d6d6;
}

.st-wide { width: 1000px; }
.st-b { width: 127px; }
.st-c { width: 28px; }
.st-d { width: 27px; }
.st-e { width: 46px; }

.st-nav {
    width: 72px;
    flex: none;
    border-right: 1px solid #d6d6d6;
}

.st-views {
    width: 66px;
    flex: none;
}

/* Windows taskbar */
.taskbar {
    height: 40px;
    flex: none;
    display: flex;
    background: #1e1e1e;
    color: #eee;
}

.task-slot {
    width: 49px;
    height: 40px;
    flex: none;
    display: flex;
    flex-direction: column;
    align-items: center;
    justify-content: center;
    position: relative;
}

.task-slot.start { width: 48px; }
.task-slot.cortana { width: 47px; }
.task-slot.taskview { width: 52px; }

.task-slot.open::after {
    content: "";
    position: absolute;
    left: 5px;
    right: 5px;
    bottom: 0;
    height: 2px;
    background: #76b9ed;
}

.task-slot.active-app {
    background: #3a3a3a;
    margin-left: 1px;
}

.task-slot.active-app::after {
    content: "";
    position: absolute;
    left: 0;
    right: 0;
    bottom: 0;
    height: 2px;
    background: #76b9ed;
}

.app-tile {
    width: 28px;
    height: 28px;
    display: flex;
    align-items: center;
    justify-content: center;
    background: #e8e8e8;
}

.ie-e {
    font-family: "DejaVu Sans", sans-serif;
    font-size: 24px;
    font-weight: 700;
    fill: #2aa3e6;
}

.dfx {
    font-family: "Liberation Sans", sans-serif;
    font-size: 10px;
    font-weight: 700;
    fill: #f08a1d;
}

.wiki {
    width: 24px;
    height: 24px;
    display: flex;
    align-items: center;
    justify-content: center;
    background: #fff;
    font-family: "Liberation Serif", serif;
    font-size: 15px;
    color: #333;
}

.amazon-a {
    height: 20px;
    font-family: "Liberation Sans", sans-serif;
    font-size: 24px;
    font-weight: 700;
    line-height: 18px;
    color: #eee;
}

.task-spacer {
    flex: 1;
}

.tray {
    display: flex;
    align-items: center;
    font-family: Roboto, sans-serif;
    font-size: 12px;
}

.tray-up { margin-right: 13px; }
.tray-wifi { margin-right: 3px; }
.tray-vol { margin-right: 9px; }
.tray-bat { margin-right: 11px; }

.tray-lang {
    width: 24px;
}

.clock {
    width: 64px;
    margin-left: 9px;
    margin-right: 13px;
    text-align: center;
    line-height: 18px;
    white-space: nowrap;
}

.tray-note {
    margin-right: 25px;
}
```
